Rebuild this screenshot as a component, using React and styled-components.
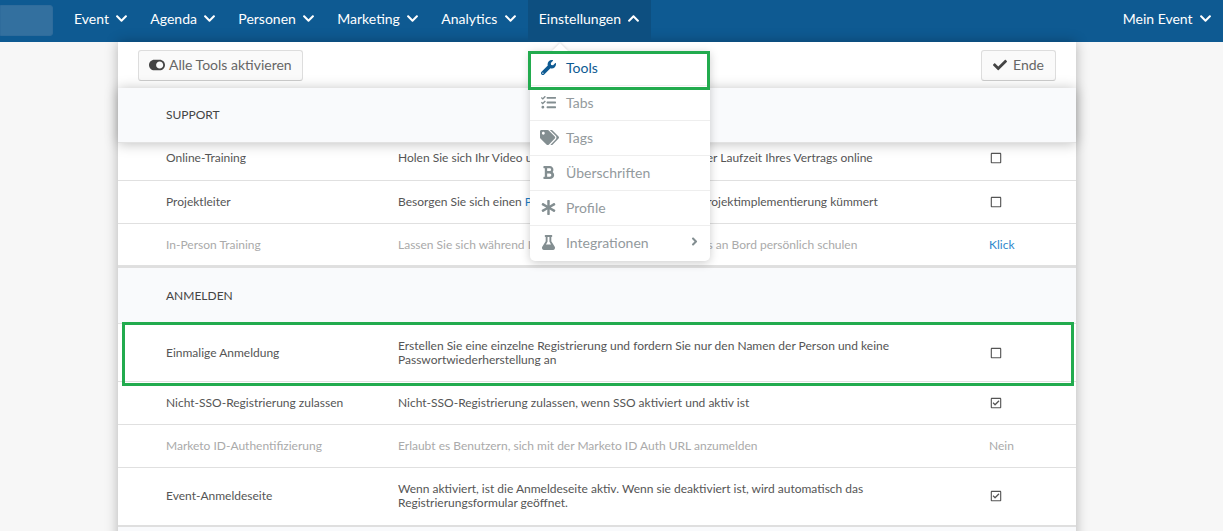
import styled, { createGlobalStyle } from "styled-components"
import {
  FaAsterisk, FaBold, FaCheck, FaChevronDown, FaChevronUp, FaFlask, FaRegCheckSquare,
  FaRegSquare, FaTags, FaTasks, FaToggleOn, FaWrench, FaAngleRight,
} from "react-icons/fa"

const GlobalStyle = createGlobalStyle`
  html, body {
    margin: 0;
    height: 100%;
    overflow: hidden;
    background: #f7f7f7;
    font-family: Lato, "Open Sans", sans-serif;
  }
`

const NAV = ["Event", "Agenda", "Personen", "Marketing", "Analytics"]

const MENU = [
  { label: "Tools", icon: <FaWrench />, active: true },
  { label: "Tabs", icon: <FaTasks /> },
  { label: "Tags", icon: <FaTags />, wide: true },
  { label: "Überschriften", icon: <FaBold /> },
  { label: "Profile", icon: <FaAsterisk /> },
  { label: "Integrationen", icon: <FaFlask />, more: true },
]

function Page() {
  return (
    <Wrapper>
      <TopBar>
        <SearchBox />
        <NavList>
          {NAV.map(n => (
            <NavItem key={n}>{n} <FaChevronDown /></NavItem>
          ))}
          <NavItem $open>Einstellungen <FaChevronUp /></NavItem>
        </NavList>
        <NavItem>Mein Event <FaChevronDown /></NavItem>
      </TopBar>

      <Panel>
        <Toolbar>
          <ToolButton><FaToggleOn size={16} /> Alle Tools aktivieren</ToolButton>
          <ToolButton $roomy><FaCheck size={14} /> Ende</ToolButton>
        </Toolbar>

        <SectionHead $sticky>SUPPORT</SectionHead>
        <Row $h={38} $pb={8}>
          <Name>Online-Training</Name>
          <Desc>Holen Sie sich Ihr Video und Ihre Schulungsteile während der Laufzeit Ihres Vertrags online</Desc>
          <Value><FaRegSquare /></Value>
        </Row>
        <Row $pb={1}>
          <Name>Projektleiter</Name>
          <Desc>Besorgen Sie sich einen <DescLink>Projektmanager</DescLink>, der sich um Ihre Projektimplementierung kümmert</Desc>
          <Value><FaRegSquare /></Value>
        </Row>
        <Row $off $h={42}>
          <Name>In-Person Training</Name>
          <Desc>Lassen Sie sich während Ihres Events vom Trainer des Teams an Bord persönlich schulen</Desc>
          <Value $link>Klick</Value>
        </Row>

        <SectionHead>ANMELDEN</SectionHead>
        <Row $h={58}>
          <Name>Einmalige Anmeldung</Name>
          <Desc>Erstellen Sie eine einzelne Registrierung und fordern Sie nur den Namen der Person und keine Passwortwiederherstellung an</Desc>
          <Value><FaRegSquare /></Value>
        </Row>
        <Row $pb={1}>
          <Name>Nicht-SSO-Registrierung zulassen</Name>
          <Desc>Nicht-SSO-Registrierung zulassen, wenn SSO aktiviert und aktiv ist</Desc>
          <Value><FaRegCheckSquare /></Value>
        </Row>
        <Row $off $pb={1}>
          <Name>Marketo ID-Authentifizierung</Name>
          <Desc>Erlaubt es Benutzern, sich mit der Marketo ID Auth URL anzumelden</Desc>
          <Value>Nein</Value>
        </Row>
        <Row $h={57} $pb={1}>
          <Name>Event-Anmeldeseite</Name>
          <Desc>Wenn aktiviert, ist die Anmeldeseite aktiv. Wenn sie deaktiviert ist, wird automatisch das Registrierungsformular geöffnet.</Desc>
          <Value><FaRegCheckSquare /></Value>
        </Row>
        <SectionHead />
      </Panel>

      <Dropdown>
        {MENU.map(m => (
          <MenuItem key={m.label} $active={m.active}>
            <MenuIcon $wide={m.wide}>{m.icon}</MenuIcon>
            {m.label}
            {m.more && <MoreArrow><FaAngleRight /></MoreArrow>}
          </MenuItem>
        ))}
      </Dropdown>

      <Highlight $x={528} $y={51} $w={182} $h={39} />
      <Highlight $x={122} $y={322} $w={952} $h={64} />
    </Wrapper>
  )
}

export default function App() {
  return (
    <>
      <GlobalStyle />
      <Page />
    </>
  )
}

const Wrapper = styled.div`
  position: relative;
  height: 531px;
  overflow: hidden;
`

const TopBar = styled.header`
  height: 42px;
  background: #0e5a92;
  display: flex;
  align-items: stretch;
  justify-content: space-between;
`

const SearchBox = styled.div`
  width: 53px;
  height: 31px;
  margin-top: 5px;
  background: #33709f;
  border-radius: 0 3px 3px 0;
  border: 1px solid #2f6c9c;
  box-sizing: border-box;
  flex: none;
`

const NavList = styled.nav`
  display: flex;
  flex: 1;
  margin-left: 10px;
`

const NavItem = styled.div`
  display: flex;
  align-items: center;
  gap: 6.4px;
  padding: 0 11px 6px;
  color: #fff;
  font-size: 14px;
  background: ${p => (p.$open ? "#0d4f80" : "transparent")};
  svg { width: 13px; height: 13px; }
`

const Panel = styled.main`
  width: 958px;
  margin-left: 118px;
  background: #fff;
  box-shadow: 0 0 12px rgba(0, 0, 0, 0.28);
`

const Toolbar = styled.div`
  height: 46px;
  padding: 8px 20px 0;
  box-sizing: border-box;
  display: flex;
  justify-content: space-between;
  align-items: flex-start;
`

const ToolButton = styled.button`
  height: 31px;
  padding: 0 ${p => (p.$roomy ? "11px" : "10px")} 2px ${p => (p.$roomy ? "11px" : "10px")};
  display: flex;
  align-items: center;
  gap: ${p => (p.$roomy ? "6px" : "4px")};
  background: #fafafa;
  border: 1px solid #ddd;
  border-bottom-color: #ccc;
  border-radius: 3px;
  color: #666;
  font-family: inherit;
  font-size: 14px;
  svg { color: #444; }
`

const SectionHead = styled.div`
  position: relative;
  height: ${p => (p.$sticky ? "55px" : "58px")};
  padding-left: 48px;
  padding-bottom: ${p => (p.$sticky ? "2px" : "0")};
  display: flex;
  align-items: center;
  box-sizing: border-box;
  background: #f9fafc;
  color: #444;
  font-size: 12px;
  border-top: ${p => (p.$sticky ? "0" : "2px solid #dfdfdf")};
  border-bottom: 1px solid #e2e2e2;
  box-shadow: ${p => (p.$sticky ? "0 1px 12px rgba(0, 0, 0, 0.25)" : "none")};
  z-index: ${p => (p.$sticky ? 1 : 0)};
`

const Row = styled.div`
  display: grid;
  grid-template-columns: 232px 591px 1fr;
  align-items: center;
  height: ${p => p.$h || 43}px;
  padding: 0 0 ${p => p.$pb || 0}px 48px;
  box-sizing: border-box;
  border-bottom: 1px solid #e0e0e0;
  font-size: 12px;
  line-height: 14px;
  color: ${p => (p.$off ? "#aaa" : "#555")};
  &:nth-last-child(2) { border-bottom: 0; }
`

const Name = styled.div``

const Desc = styled.div`
  padding-right: 30px;
`

const DescLink = styled.span`
  color: #1d7cc4;
`

const Value = styled.div`
  color: ${p => (p.$link ? "#2f87cc" : "inherit")};
  svg { display: block; margin-left: 1px; width: 12px; height: 12px; color: #555; }
`

const Dropdown = styled.ul`
  position: absolute;
  left: 530px;
  top: 51px;
  width: 180px;
  margin: 0;
  padding: 0;
  list-style: none;
  background: #fff;
  border-radius: 0 0 5px 5px;
  box-shadow: 0 2px 10px rgba(0, 0, 0, 0.2);
  z-index: 3;
  &::before {
    content: "";
    position: absolute;
    top: -8px;
    left: 22px;
    border: 8px solid transparent;
    border-top: 0;
    border-bottom-color: #fff;
    filter: drop-shadow(0 -1px 1px rgba(0, 0, 0, 0.12));
  }
`

const MenuItem = styled.li`
  position: relative;
  height: 35px;
  display: flex;
  align-items: center;
  box-sizing: border-box;
  padding: 0 0 2px 11px;
  font-size: 14px;
  color: ${p => (p.$active ? "#0e5a92" : "#939a9d")};
  border-bottom: 1px solid #eee;
  &:last-child { border-bottom: 0; }
  svg { color: ${p => (p.$active ? "#0e5a92" : "#838e91")}; }
`

const MenuIcon = styled.span`
  width: 25px;
  flex: none;
  display: flex;
  align-items: center;
  margin-left: ${p => (p.$wide ? "-1px" : "0")};
  margin-right: ${p => (p.$wide ? "1px" : "0")};
  svg { width: ${p => (p.$wide ? "19px" : "15px")}; height: ${p => (p.$wide ? "19px" : "15px")}; }
`

const MoreArrow = styled.span`
  position: absolute;
  right: 9px;
  top: 9px;
  display: flex;
  svg { width: 13px; height: 13px; }
`

const Highlight = styled.div`
  position: absolute;
  left: ${p => p.$x}px;
  top: ${p => p.$y}px;
  width: ${p => p.$w}px;
  height: ${p => p.$h}px;
  box-sizing: border-box;
  border: 3px solid #22ab4e;
  z-index: 4;
`
